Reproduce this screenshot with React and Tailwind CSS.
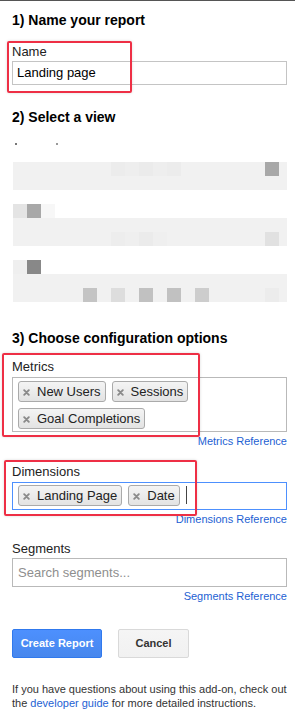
import React from 'react';

const BASE = 'bg-[#f1f1f1]';

// blurred account/property/view picker, one cell = 14px
const bands = [
  {
    lead: null,
    rowA: { 7: 'bg-[#ececec]', 8: 'bg-[#eeeeee]', 9: 'bg-[#ebebeb]', 10: 'bg-[#eeeeee]', 11: 'bg-[#ececec]', 18: 'bg-[#a8a8a8]' },
    rowB: {},
  },
  {
    lead: ['bg-[#e4e4e4]', 'bg-[#a8a8a8]', 'bg-[#f7f7f7]'],
    rowA: {},
    rowB: { 7: 'bg-[#ededed]', 8: 'bg-[#efefef]', 9: 'bg-[#ebebeb]', 10: 'bg-[#efefef]', 18: 'bg-[#e1e1e1]' },
  },
  {
    lead: ['bg-[#efefef]', 'bg-[#888888]'],
    rowA: {},
    rowB: { 5: 'bg-[#c4c4c4]', 7: 'bg-[#dddddd]', 9: 'bg-[#c1c1c1]', 11: 'bg-[#c1c1c1]', 13: 'bg-[#cdcdcd]', 18: 'bg-[#ececec]' },
  },
];

function Row({ cells, fill = BASE }) {
  return (
    <div className="flex h-[14px]">
      {Array.from({ length: 20 }).map((_, i) => (
        <div key={i} className={`h-[14px] ${i === 19 ? 'w-[8px]' : 'w-[14px]'} ${cells[i] || fill}`} />
      ))}
    </div>
  );
}

function Chip({ label }) {
  return (
    <div className="flex items-center h-[21px] pl-[4px] pr-[4px] gap-[7px] rounded-[3px] border border-[#aaaaaa] bg-gradient-to-b from-[#f4f4f4] to-[#e3e3e3] text-[13px] text-[#222]">
      <svg width="7" height="7" viewBox="0 0 7 7" className="mt-[2px]">
        <path d="M1.2 1.2 L5.8 5.8 M5.8 1.2 L1.2 5.8" stroke="#8a8a8a" strokeWidth="1.9" strokeLinecap="round" />
      </svg>
      <span className="leading-[16px]">{label}</span>
    </div>
  );
}

function RefLink({ children }) {
  return (
    <div className="mt-[2px] text-right text-[11px] leading-[14px] text-[#1e5fd3]">{children}</div>
  );
}

export default function App() {
  return (
    <div className="relative w-[295px] min-h-[717px] bg-white border-t border-[#555555] font-['Liberation_Sans',Arial,sans-serif] text-[#222222] overflow-hidden">
      <div className="pl-3 pr-2 pt-[10px]">
        <h1 className="text-[14px] font-bold leading-[18px] text-black">1) Name your report</h1>
        <div className="mt-[15px] text-[13px] leading-[16px]">Name</div>
        <div className="mt-[1px] h-[24px] border border-[#c4c4c4] flex items-center pl-[4px] text-[13px] text-black">
          Landing page
        </div>

        <h2 className="mt-[23px] text-[14px] font-bold leading-[18px] text-black">2) Select a view</h2>
        <div className="mt-[17px] flex h-[2px]">
          <div className="ml-[3px] w-[2px] h-[2px] bg-[#777]" />
          <div className="ml-[39px] w-[2px] h-[2px] bg-[#999]" />
        </div>

        <div className="ml-[1px]">
          {bands.map((b, i) => (
            <div key={i} className={i === 0 ? 'mt-[17px]' : ''}>
              {b.lead ? (
                <div className="mt-[14px]">
                  <Row cells={b.lead} fill="bg-white" />
                </div>
              ) : null}
              <Row cells={b.rowA} />
              <Row cells={b.rowB} />
            </div>
          ))}
        </div>

        <h2 className="mt-[27px] text-[14px] font-bold leading-[18px] text-black">3) Choose configuration options</h2>

        <div className="mt-[12px] text-[13px] leading-[16px]">Metrics</div>
        <div className="mt-[2px] h-[55px] border border-[#b9b9b9] pl-[5px] pt-[3px] flex flex-wrap content-start gap-x-[6px] gap-y-[6px]">
          <Chip label="New Users" />
          <Chip label="Sessions" />
          <Chip label="Goal Completions" />
        </div>
        <RefLink>Metrics Reference</RefLink>

        <div className="mt-[16px] text-[13px] leading-[16px]">Dimensions</div>
        <div className="mt-[2px] h-[28px] border border-[#4d90fe] pl-[5px] pt-[2px] flex items-start gap-x-[6px]">
          <Chip label="Landing Page" />
          <Chip label="Date" />
          <div className="mt-[1px] w-px h-[18px] bg-[#444]" />
        </div>
        <RefLink>Dimensions Reference</RefLink>

        <div className="mt-[15px] text-[13px] leading-[16px]">Segments</div>
        <div className="mt-[1px] h-[29px] border border-[#b9b9b9] flex items-center pl-[5px] text-[13px] text-[#8e8e8e]">
          Search segments...
        </div>
        <RefLink>Segments Reference</RefLink>

        <div className="mt-[26px] flex gap-[16px]">
          <button className="w-[90px] h-[29px] rounded-[2px] border border-[#3079ed] bg-gradient-to-b from-[#4d90fe] to-[#4787ed] text-white text-[11px] font-bold">
            Create Report
          </button>
          <button className="w-[71px] h-[29px] rounded-[2px] border border-[#d9d9d9] bg-gradient-to-b from-[#f5f5f5] to-[#f1f1f1] text-[#333] text-[11px] font-bold">
            Cancel
          </button>
        </div>

        <p className="mt-[24px] text-[11px] leading-[14px] text-[#333]">
          If you have questions about using this add-on, check out the{' '}
          <a className="text-[#1e5fd3]">developer guide</a> for more detailed instructions.
        </p>
      </div>

      {/* annotation boxes */}
      <div className="absolute left-[7px] top-[40px] w-[125px] h-[52px] border-2 border-[#ee2f45] rounded-[2px] shadow-[0_0_3px_rgba(0,0,0,0.15)]" />
      <div className="absolute left-[2px] top-[352px] w-[198px] h-[84px] border-2 border-[#ee2f45] rounded-[2px] shadow-[0_0_3px_rgba(0,0,0,0.15)]" />
      <div className="absolute left-[4px] top-[459px] w-[193px] h-[56px] border-2 border-[#ee2f45] rounded-[2px] shadow-[0_0_3px_rgba(0,0,0,0.15)]" />
    </div>
  );
}
